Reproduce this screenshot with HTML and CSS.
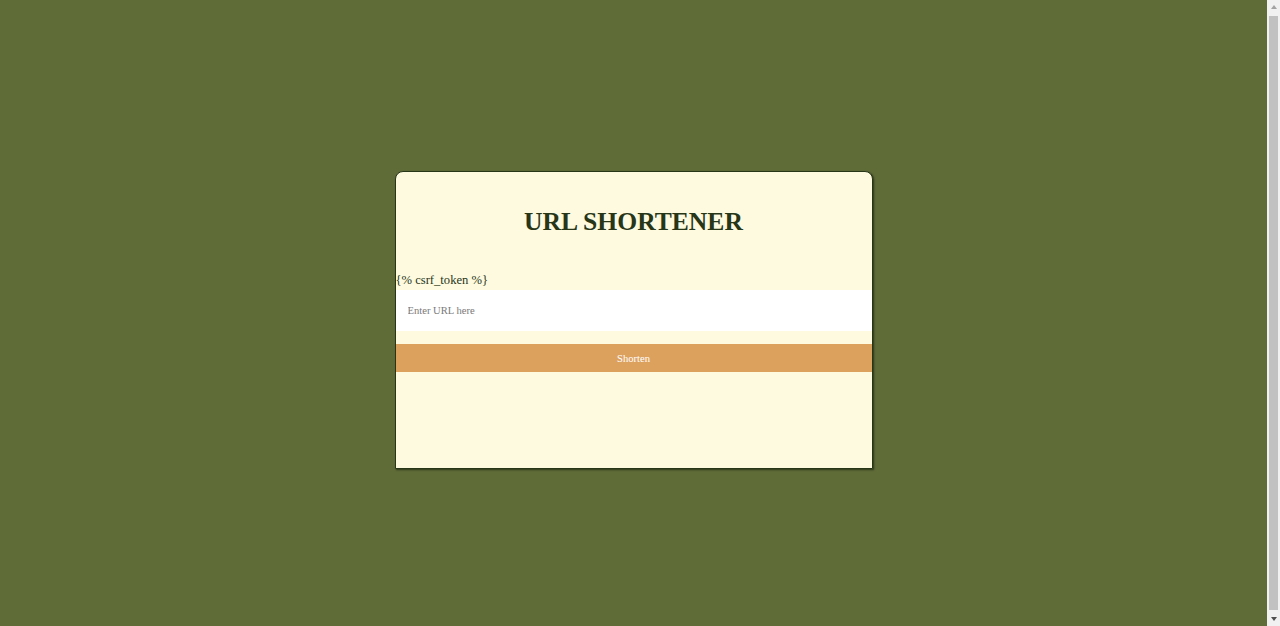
FILE: index.html
```html
<!DOCTYPE html>
<html lang="en">
<head>
<meta charset="utf-8">
<title>URL Shortener</title>
<link rel="stylesheet" href="styles.css">
</head>
<body>
  <div class="card">
    <h1 class="title">URL SHORTENER</h1>
    <form class="form">
      <span class="token">{% csrf_token %}</span>
      <input class="url-input" type="text" placeholder="Enter URL here">
      <button class="btn" type="button">Shorten</button>
    </form>
  </div>
  <div class="scrollbar">
    <span class="arrow arrow-up"></span>
    <span class="thumb"></span>
    <span class="arrow arrow-down"></span>
  </div>
</body>
</html>
```

FILE: styles.css
```css
html {
  background: #606c38;
}
body {
  box-sizing: border-box;
  margin: 0;
  height: 100vh;
  padding: 14px 13px 0 0;
  display: flex;
  align-items: center;
  justify-content: center;
  font-family: "Liberation Serif", "Times New Roman", serif;
  background: #606c38;
  overflow: hidden;
}
.card {
  box-sizing: border-box;
  width: 478px;
  height: 298px;
  background: #fefae0;
  border: 1px solid #283618;
  border-radius: 8px 8px 0 0;
  box-shadow: 1px 1px 2px rgba(20, 30, 10, 0.7);
  display: flex;
  flex-direction: column;
}
.title {
  margin: 35px 0 0;
  font-size: 25.6px;
  line-height: 30px;
  font-weight: bold;
  text-align: center;
  color: #283618;
}
.form {
  display: flex;
  flex-direction: column;
  margin-top: 35px;
}
.token {
  font-size: 12.6px;
  line-height: 16px;
  color: #283618;
  margin-bottom: 2px;
}
.url-input {
  box-sizing: border-box;
  height: 41px;
  border: none;
  outline: none;
  background: #ffffff;
  padding: 0 12px;
  font-family: "Liberation Serif", "Times New Roman", serif;
  font-size: 10.6px;
  color: #283618;
}
.url-input::placeholder {
  color: #7a7a7a;
}
.btn {
  margin-top: 13px;
  height: 28px;
  border: none;
  background: #dda15e;
  color: #ffffff;
  font-family: "Liberation Serif", "Times New Roman", serif;
  font-size: 10.6px;
  padding: 0;
}
.scrollbar {
  position: fixed;
  top: 0;
  right: 0;
  bottom: 0;
  width: 13px;
  background: #f1f1f1;
  display: flex;
  flex-direction: column;
  align-items: center;
}
.arrow {
  width: 0;
  height: 0;
  border-left: 3.5px solid transparent;
  border-right: 3.5px solid transparent;
}
.arrow-up {
  margin: 5px 0 5px;
  border-bottom: 4px solid #a3a3a3;
}
.arrow-down {
  margin: 5px 0 5px;
  border-top: 4px solid #505050;
}
.thumb {
  flex: 1;
  width: 9px;
  margin: 2px 0;
  background: #c1c1c1;
}
```
